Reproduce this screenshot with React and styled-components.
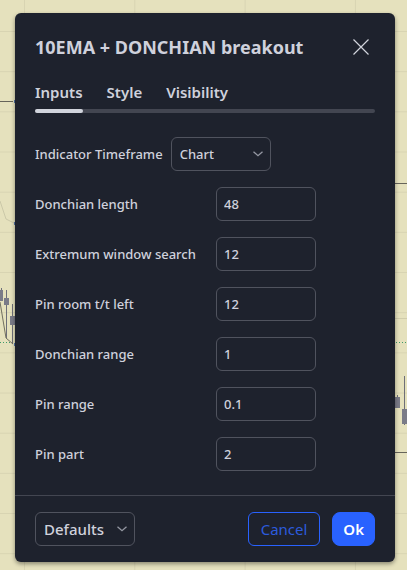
import React, { useState } from "react";
import styled, { createGlobalStyle, css } from "styled-components";

const GlobalStyle = createGlobalStyle`
  *, *::before, *::after { box-sizing: border-box; }
  body {
    margin: 0;
    background: #e5e1bd;
    font-family: "Noto Sans", "Open Sans", sans-serif;
    color: #cfd1dc;
  }
  button, input, select { font-family: inherit; color: inherit; margin: 0; }
`;

const Page = styled.main`
  position: relative;
  min-height: 100vh;
  padding: 13px 12px 8px 15px;
  overflow: hidden;
`;

const Chart = styled.div`
  position: absolute;
  inset: 0;
  display: flex;
  justify-content: space-between;
`;

const Grid = styled.svg`
  position: absolute;
  width: 100%;
  height: 100%;
`;

const Series = styled.svg`
  position: relative;
  flex: none;
`;

const Dialog = styled.section`
  position: relative;
  background: #1e222d;
  border-radius: 6px;
  box-shadow: 0 2px 4px rgba(0, 0, 0, 0.4);
`;

const Header = styled.header`
  display: flex;
  align-items: center;
  justify-content: space-between;
  padding: 20px 20px 0;
`;

const Title = styled.h1`
  margin: 0;
  font-size: 18px;
  line-height: 28px;
  font-weight: 700;
  white-space: nowrap;
`;

const CloseButton = styled.button`
  display: flex;
  padding: 6px;
  border: 0;
  background: none;
  cursor: pointer;
`;

const Tabs = styled.div`
  position: relative;
  display: flex;
  gap: 24px;
  margin: 18px 20px 0;
  &::after {
    content: "";
    position: absolute;
    inset: auto 0 0;
    height: 4px;
    border-radius: 2px;
    background: #434651;
  }
`;

const Tab = styled.button`
  position: relative;
  z-index: 1;
  padding: 0 0 8px;
  border: 0;
  background: none;
  font-size: 15px;
  line-height: 26px;
  font-weight: 600;
  cursor: pointer;
  ${({ $active }) => $active && css`
    &::after {
      content: "";
      position: absolute;
      inset: auto 0 0;
      height: 4px;
      border-radius: 2px;
      background: #d1d4dc;
    }
  `}
`;

const Fields = styled.div`
  display: flex;
  flex-direction: column;
  gap: 16px;
  padding: 24px 20px;
`;

const TimeframeRow = styled.div`
  display: flex;
  align-items: center;
  gap: 8px;
`;

const FieldRow = styled.div`
  display: grid;
  grid-template-columns: 181px 100px;
  align-items: center;
`;

const Label = styled.label`
  font-size: 13px;
  line-height: 20px;
  font-weight: 500;
  white-space: nowrap;
`;

const controlFrame = css`
  width: 100px;
  height: 34px;
  border: 1px solid #50535e;
  border-radius: 6px;
  background: none;
`;

const TextInput = styled.input`
  ${controlFrame}
  padding: 0 7px;
  font-size: 13px;
  font-weight: 500;
`;

const SelectBox = styled.div`
  position: relative;
  display: flex;
`;

const Select = styled.select`
  ${controlFrame}
  padding: 0 20px 0 8px;
  appearance: none;
  font-size: ${({ $large }) => ($large ? 15 : 13)}px;
  font-weight: 500;
  option { background: #1e222d; }
`;

const Chevron = styled.svg`
  position: absolute;
  right: 8px;
  top: 14px;
  pointer-events: none;
`;

const Footer = styled.footer`
  display: flex;
  justify-content: space-between;
  align-items: center;
  padding: 16px 20px;
  border-top: 1px solid #434651;
`;

const Actions = styled.div`
  display: flex;
  gap: 12px;
`;

const ActionButton = styled.button`
  height: 34px;
  padding: 0 ${({ $primary }) => ($primary ? 10 : 12)}px;
  border: 1px solid #2962ff;
  border-radius: ${({ $primary }) => ($primary ? 8 : 6)}px;
  font-size: 15px;
  line-height: 24px;
  cursor: pointer;
  font-weight: ${({ $primary }) => ($primary ? 600 : 400)};
  background: ${({ $primary }) => ($primary ? "#2962ff" : "transparent")};
  && { color: ${({ $primary }) => ($primary ? "#ffffff" : "#2c5bdd")}; }
`;

const fields = [
  ["Donchian length", "48"],
  ["Extremum window search", "12"],
  ["Pin room t/t left", "12"],
  ["Donchian range", "1"],
  ["Pin range", "0.1"],
  ["Pin part", "2"],
];

function Dropdown({ id, label, options, large }) {
  return (
    <SelectBox>
      <Select id={id} aria-label={label} $large={large}>
        {options.map((o) => <option key={o}>{o}</option>)}
      </Select>
      <Chevron width="10" height="6" viewBox="0 0 10 6" fill="none" stroke="#9598a3" strokeWidth="1.3" aria-hidden="true">
        <path d="M.5.7 5 4.7 9.5.7" />
      </Chevron>
    </SelectBox>
  );
}

function PriceChart() {
  return (
    <Chart aria-hidden="true">
      <Grid>
        <defs>
          <pattern id="rows" y="31" width="407" height="40.17" patternUnits="userSpaceOnUse">
            <path d="M0 .5H407" stroke="#d8d4b2" />
          </pattern>
          <pattern id="columns" x="24" width="110.3" height="570" patternUnits="userSpaceOnUse">
            <path d="M.5 0V570" stroke="#d8d4b2" />
          </pattern>
        </defs>
        <rect width="100%" height="100%" fill="url(#rows)" />
        <rect width="100%" height="100%" fill="url(#columns)" />
      </Grid>
      <Series width="16" height="570" fill="none">
        <path d="M0 101.5H13" stroke="#66645a" />
        <path d="M0 201 6 219 14 223" stroke="#cbc8a8" />
        <path d="M0 342.5H16" stroke="#3f9a6b" strokeDasharray="1 2" />
        <path d="M1.5 288V301M6.5 290V338M12.5 304V344" stroke="#6e6f78" />
        <path d="M0 290h3v11H0zM4 298h5v7H4zM10 316h6v9h-6z" fill="#7a7b87" />
        <path d="M0 302 6 338 13 344" stroke="#727060" />
        <path d="M14 100h2v3h-2zM14 222h2v3h-2zM14 343h2v3h-2z" fill="#5878a8" />
      </Series>
      <Series width="13" height="570" fill="none">
        <path d="M0 183.5H13M0 452.5H13" stroke="#66645a" />
        <path d="M0 318.5H13" stroke="#d0ccab" />
        <path d="M2 342.5H13" stroke="#3f9a6b" strokeDasharray="1 2" />
        <path d="M3.5 395V408M10.5 376V425" stroke="#6e6f78" />
        <path d="M0 397h6v11H0zM8 409h5v15H8z" fill="#7a7b87" />
      </Series>
    </Chart>
  );
}

export default function App() {
  const [active, setActive] = useState("Inputs");
  return (
    <>
      <GlobalStyle />
      <Page>
        <PriceChart />
        <Dialog role="dialog" aria-labelledby="dialog-title">
          <Header>
            <Title id="dialog-title">10EMA + DONCHIAN breakout</Title>
            <CloseButton aria-label="Close">
              <svg width="16" height="16" viewBox="0 0 16 16" stroke="#d1d4dc" strokeWidth="1.2">
                <path d="m.5.5 15 15m0-15-15 15" />
              </svg>
            </CloseButton>
          </Header>
          <Tabs role="tablist">
            {["Inputs", "Style", "Visibility"].map((tab) => (
              <Tab key={tab} role="tab" aria-selected={active === tab} $active={active === tab} onClick={() => setActive(tab)}>
                {tab}
              </Tab>
            ))}
          </Tabs>
          <Fields>
            <TimeframeRow>
              <Label htmlFor="timeframe">Indicator Timeframe</Label>
              <Dropdown id="timeframe" options={["Chart"]} />
            </TimeframeRow>
            {fields.map(([label, value], i) => (
              <FieldRow key={label}>
                <Label htmlFor={`field-${i}`}>{label}</Label>
                <TextInput id={`field-${i}`} defaultValue={value} inputMode="decimal" />
              </FieldRow>
            ))}
          </Fields>
          <Footer>
            <Dropdown id="defaults" label="Defaults" options={["Defaults"]} large />
            <Actions>
              <ActionButton>Cancel</ActionButton>
              <ActionButton $primary>Ok</ActionButton>
            </Actions>
          </Footer>
        </Dialog>
      </Page>
    </>
  );
}
